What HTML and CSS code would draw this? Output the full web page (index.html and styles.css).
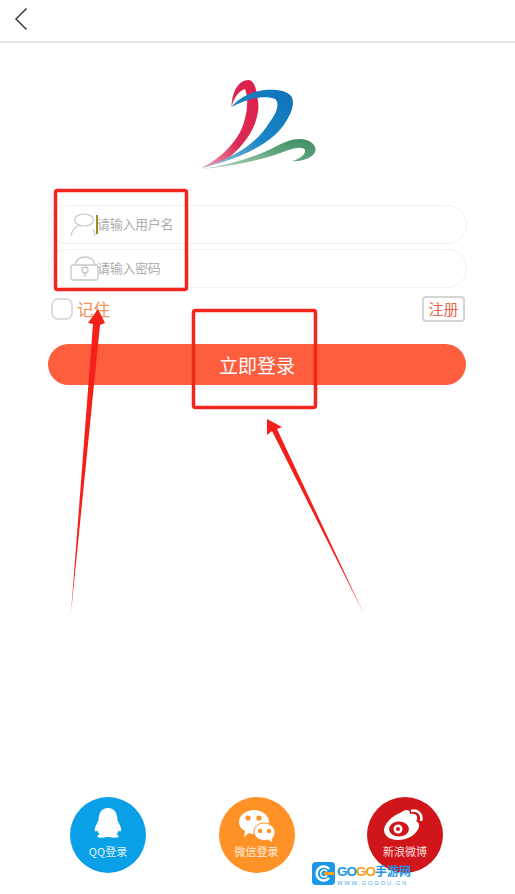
FILE: index.html
```html
<!DOCTYPE html>
<html lang="zh-CN">
<head>
    <meta charset="UTF-8">
    <meta name="viewport" content="width=device-width, initial-scale=1.0">
    <title>登录</title>
    <link rel="stylesheet" href="styles.css">
</head>
<body>
    <div class="page">
        <!-- Top bar -->
        <div class="topBar">
            <svg class="backIcon" width="14" height="24" viewBox="0 0 14 24"><path d="M12.500 1.500 L2 12 L12.500 22.500" fill="none" stroke="#444" stroke-width="1.600"/></svg>
        </div>

        <!-- Logo -->
        <div class="logoBox">
            <svg width="118" height="92" viewBox="0 0 118 92">
                <defs>
                    <linearGradient id="redGrad" x1="0" y1="1" x2="1" y2="0"><stop offset="0" stop-color="#e8b0bc"/><stop offset="0.45" stop-color="#dc2a55"/><stop offset="1" stop-color="#de1f4c"/></linearGradient>
                    <linearGradient id="blueGrad" x1="0" y1="1" x2="1" y2="0"><stop offset="0" stop-color="#a8c8dc"/><stop offset="0.5" stop-color="#1c86c8"/><stop offset="1" stop-color="#0f72b8"/></linearGradient>
                    <linearGradient id="greenGrad" x1="0" y1="1" x2="1" y2="0"><stop offset="0" stop-color="#c5d8cc"/><stop offset="0.6" stop-color="#5fa67f"/><stop offset="1" stop-color="#3c8a62"/></linearGradient>
                </defs>
                <path d="M2 89 C25 78 42 58 45.500 41 C49 30 49 17 46 10 C40 12 35 18 32.500 28 C33 12 40 1 49.500 1 C55 2 58 8 59.500 28 C58 46 50 61 31 78 C22 83 12 87 2 89 Z" fill="url(#redGrad)"/>
                <path d="M2 89 C35 80 60 62 70 44 C78 34 81 24 76 20 C65 15 45 21 32.500 28 C38 20 50 14 60 12 C70 10 86 10 92 17 C97 24 92 36 84 47 C70 66 40 80 2 89 Z" fill="url(#blueGrad)"/>
                <path d="M2 90 C30 86 55 78 72 70 C85 63 92 60 101 60 C111 60 117 66 116.500 71 C116 78 104 83 93 82 C101 80 107 75 106 71 C104 67 94 69 84 73 C60 82 30 88 2 90 Z" fill="url(#greenGrad)"/>
            </svg>
        </div>

        <!-- Login form -->
        <div class="form">
            <div class="inputBox">
                <svg class="fieldIcon" width="26" height="24" viewBox="0 0 26 24"><g fill="none" stroke="#c8c8c8" stroke-width="1.200"><ellipse cx="14" cy="7" rx="9.500" ry="6"/><path d="M1 23 C2 17 5 14 9 12.500"/><path d="M23 16 C24 18 25 20 25 23"/></g></svg>
                <span class="caret"></span>
                <span class="placeholder">请输入用户名</span>
            </div>
            <div class="inputBox">
                <svg class="fieldIcon" width="30" height="26" viewBox="0 0 30 26"><g fill="none" stroke="#c8c8c8" stroke-width="1.300"><path d="M5 9 C6 3 10 1 15 1 C20 1 24 3 25 9"/><rect x="1" y="9" width="27" height="15" rx="2"/><circle cx="15" cy="14" r="3"/><path d="M15 17 V21"/></g></svg>
                <span class="placeholder">请输入密码</span>
            </div>
            <div class="optionRow">
                <div class="remember">
                    <span class="checkBox"></span>
                    <span class="rememberText">记住</span>
                </div>
                <a class="registerBtn">注册</a>
            </div>
            <button class="loginBtn">立即登录</button>
        </div>

        <!-- Social login -->
        <div class="socialRow">
            <div class="socialItem qq">
                <svg viewBox="0 0 34 34" preserveAspectRatio="none"><path d="M17 1 C24 1 27 7 27 13 C27 15 28 16 29 18 C31 22 32 25 30 26 C29 26 28 25 28 25 C28 27 27 28 26 29 C28 30 29 31 28 32 C26 33 22 33 18 32 H16 C12 33 8 33 6 32 C5 31 6 30 8 29 C7 28 6 27 6 25 C6 25 5 26 4 26 C2 25 3 22 5 18 C6 16 7 15 7 13 C7 7 10 1 17 1 Z" fill="#fff"/></svg>
                <span class="socialLabel">QQ登录</span>
            </div>
            <div class="socialItem wechat">
                <svg width="40" height="36" viewBox="0 0 40 36"><path d="M17 4 C25 4 32 9 32 16 C32 22 25 28 17 28 C15 28 14 28 12 27 L7 31 L8 25 C4 23 2 20 2 16 C2 9 9 4 17 4 Z" fill="#fff"/><path d="M27 17 C33 17 38 21 38 26 C38 29 37 31 35 33 L36 37 L31 34 C24 36 17 32 17 26 C17 21 21 17 27 17 Z" fill="#fff" stroke="#ff9226" stroke-width="1"/><circle cx="11" cy="12" r="2.600" fill="#ff9226"/><circle cx="22" cy="12" r="2.600" fill="#ff9226"/><circle cx="23" cy="25" r="2.200" fill="#ff9226"/><circle cx="32" cy="25" r="2.200" fill="#ff9226"/></svg>
                <span class="socialLabel">微信登录</span>
            </div>
            <div class="socialItem weibo">
                <svg width="44" height="34" viewBox="0 0 44 34"><path d="M17 6 C23 2 27 2 27 7 C33 6 36 9 33 14 C37 16 37 20 34 24 C30 30 22 33 15 33 C7 33 1 29 1 23 C1 17 9 9 17 6 Z" fill="#fff"/><ellipse cx="16" cy="22" rx="10" ry="7.500" fill="#d0161a"/><circle cx="15" cy="22" r="4.500" fill="#fff"/><circle cx="15" cy="22" r="2" fill="#d0161a"/><path d="M28 4 C34 2 40 7 38 14" fill="none" stroke="#fff" stroke-width="2.500"/><path d="M28 9 C31 8 34 10 33 13" fill="none" stroke="#fff" stroke-width="2"/></svg>
                <span class="socialLabel">新浪微博</span>
            </div>
        </div>

        <!-- Annotations drawn over the screenshot -->
        <svg class="marks" width="515" height="894" viewBox="0 0 515 894">
            <rect x="55.500" y="190.500" width="131" height="99" rx="2" fill="none" stroke="#f2261c" stroke-width="3.500"/>
            <rect x="193.500" y="310.500" width="122" height="97" rx="2" fill="none" stroke="#f2261c" stroke-width="3.500"/>
            <path d="M71 613 L93 324 L88 323 L98 309 L105 323 L100 325 Z" fill="#f5201a"/>
            <path d="M363 612 L272 431 L267 435 L267 419 L282 427 L277 429 Z" fill="#f5201a"/>
        </svg>

        <!-- Watermark -->
        <div class="watermark">
            <svg width="23" height="23" viewBox="0 0 23 23"><rect width="23" height="23" rx="4" fill="#1a97e6"/><path d="M17 7 A7 7 0 1 0 17 16" fill="none" stroke="#fff" stroke-width="2.500"/><path d="M15 9.500 A3.500 3.500 0 1 0 15 13.500" fill="none" stroke="#fff" stroke-width="1.500"/><rect x="12" y="10" width="10" height="3" fill="#f5a020"/></svg>
            <div class="wmText">
                <div class="wmTitle"><span class="wmLatin">GO</span><span class="wmLatin wmOrange">GO</span>手游网</div>
                <div class="wmUrl">WWW.GOGOU.CN</div>
            </div>
        </div>
    </div>
</body>
</html>
```

FILE: styles.css
```css
body {
    margin: 0;
    padding: 0;
    background-color: #fff;
    font-family: "Noto Sans CJK SC", "Liberation Sans", sans-serif;
}
.page {
    position: relative;
    width: 515px;
    height: 894px;
    overflow: hidden;
}
.topBar {
    height: 41px;
    border-bottom: 2px solid #e4e4e4;
    display: flex;
    align-items: center;
    padding-left: 14px;
}
.backIcon {
    margin-top: -3px;
}
.logoBox {
    display: flex;
    justify-content: center;
    padding-top: 36px;
    height: 126px;
    box-sizing: border-box;
}
.form {
    margin: 36px 48px 0 48px;
    display: flex;
    flex-direction: column;
}
.inputBox {
    position: relative;
    height: 37px;
    border: 1px solid #f1f1f1;
    border-radius: 20px;
    display: flex;
    align-items: center;
    padding-left: 48px;
    margin-bottom: 5px;
    width: 369px;
}
.fieldIcon {
    position: absolute;
    left: 21px;
    top: 7px;
}
.inputBox + .inputBox .fieldIcon {
    top: 6px;
}
.caret {
    position: absolute;
    left: 47px;
    top: 9px;
    width: 2px;
    height: 19px;
    background-color: #a08a30;
}
.placeholder {
    font-size: 13px;
    letter-spacing: -0.3px;
    color: #adadad;
    margin-top: -2px;
}
.optionRow {
    display: flex;
    justify-content: space-between;
    align-items: center;
    height: 26px;
    margin-top: 3px;
    padding: 0 2px 0 3px;
}
.remember {
    display: flex;
    align-items: center;
    gap: 4px;
}
.checkBox {
    width: 18px;
    height: 18px;
    border: 2px solid #dcdcdc;
    border-radius: 7px;
}
.rememberText {
    font-size: 16.5px;
    color: #f0935a;
}
.registerBtn {
    width: 39px;
    height: 22px;
    border: 2px solid #d4d4d4;
    border-radius: 4px;
    font-size: 15px;
    line-height: 22px;
    text-align: center;
    color: #e8654d;
}
.loginBtn {
    margin-top: 22px;
    height: 41px;
    width: 418px;
    border: none;
    border-radius: 21px;
    background-color: #fd5e3e;
    color: #fff;
    font-family: inherit;
    font-size: 19px;
    padding: 0;
}
.socialRow {
    position: absolute;
    left: 70px;
    top: 797px;
    display: flex;
    gap: 72.5px;
}
.socialItem {
    width: 76px;
    height: 76px;
    border-radius: 50%;
    display: flex;
    flex-direction: column;
    align-items: center;
    color: #fff;
}
.socialItem svg {
    margin-top: 9px;
    height: 36px;
}
.qq svg {
    width: 32px;
    height: 32px;
    margin: 10px 0 3px;
}
.socialLabel {
    font-size: 11px;
    line-height: 14px;
    margin-top: 2px;
    opacity: 0.85;
}
.qq {
    background-color: #0aa0e8;
}
.wechat {
    background-color: #ff9226;
}
.weibo {
    background-color: #d0161a;
}
.marks {
    position: absolute;
    left: 0;
    top: 0;
}
.watermark {
    position: absolute;
    left: 312px;
    top: 862px;
    display: flex;
    gap: 2px;
}
.wmText {
    display: flex;
    flex-direction: column;
}
.wmTitle {
    font-size: 12px;
    line-height: 17px;
    font-weight: bold;
    color: #1a97e6;
    white-space: nowrap;
}
.wmLatin {
    font-family: "Liberation Sans", sans-serif;
    font-size: 13.5px;
    letter-spacing: -1px;
}
.wmOrange {
    color: #f5a020;
}
.wmUrl {
    font-family: "Liberation Sans", sans-serif;
    font-size: 6px;
    line-height: 7px;
    letter-spacing: 1.6px;
    color: #4aa8e0;
}
```
